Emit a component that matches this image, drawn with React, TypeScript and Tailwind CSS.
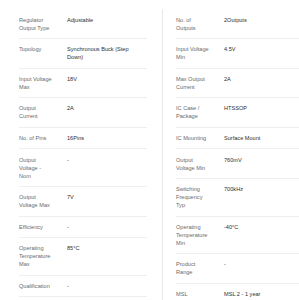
type Spec = { label: string; value: string };

const left: Spec[] = [
  { label: "Regulator Output Type", value: "Adjustable" },
  { label: "Topology", value: "Synchronous Buck (Step Down)" },
  { label: "Input Voltage Max", value: "18V" },
  { label: "Output Current", value: "2A" },
  { label: "No. of Pins", value: "16Pins" },
  { label: "Output Voltage - Nom", value: "-" },
  { label: "Output Voltage Max", value: "7V" },
  { label: "Efficiency", value: "-" },
  { label: "Operating Temperature Max", value: "85°C" },
  { label: "Qualification", value: "-" },
];

const right: Spec[] = [
  { label: "No. of Outputs", value: "2Outputs" },
  { label: "Input Voltage Min", value: "4.5V" },
  { label: "Max Output Current", value: "2A" },
  { label: "IC Case / Package", value: "HTSSOP" },
  { label: "IC Mounting", value: "Surface Mount" },
  { label: "Output Voltage Min", value: "760mV" },
  { label: "Switching Frequency Typ", value: "700kHz" },
  { label: "Operating Temperature Min", value: "-40°C" },
  { label: "Product Range", value: "-" },
  { label: "MSL", value: "MSL 2 - 1 year" },
];

function SpecColumn({ items }: { items: Spec[] }) {
  return (
    <dl className="flex w-[128px] shrink-0 flex-col">
      {items.map((item) => (
        <div key={item.label} className="flex border-b border-[#eeeeee] py-[6.3px]">
          <dt className="mr-[14px] w-[34px] shrink-0 text-[#6a6a6a]">{item.label}</dt>
          <dd className="flex-1 pr-[10px] text-[#2e2e2e]">{item.value}</dd>
        </div>
      ))}
    </dl>
  );
}

export default function App() {
  return (
    <div className="flex h-[300px] overflow-hidden bg-white pt-[9.4px] pl-[19px] font-['Liberation_Sans',Arial,sans-serif] text-[5.6px] leading-[8px]">
      <SpecColumn items={left} />
      <div className="ml-[15px] flex border-l border-[#e8e8e8] pl-[13px]">
        <SpecColumn items={right} />
      </div>
    </div>
  );
}
